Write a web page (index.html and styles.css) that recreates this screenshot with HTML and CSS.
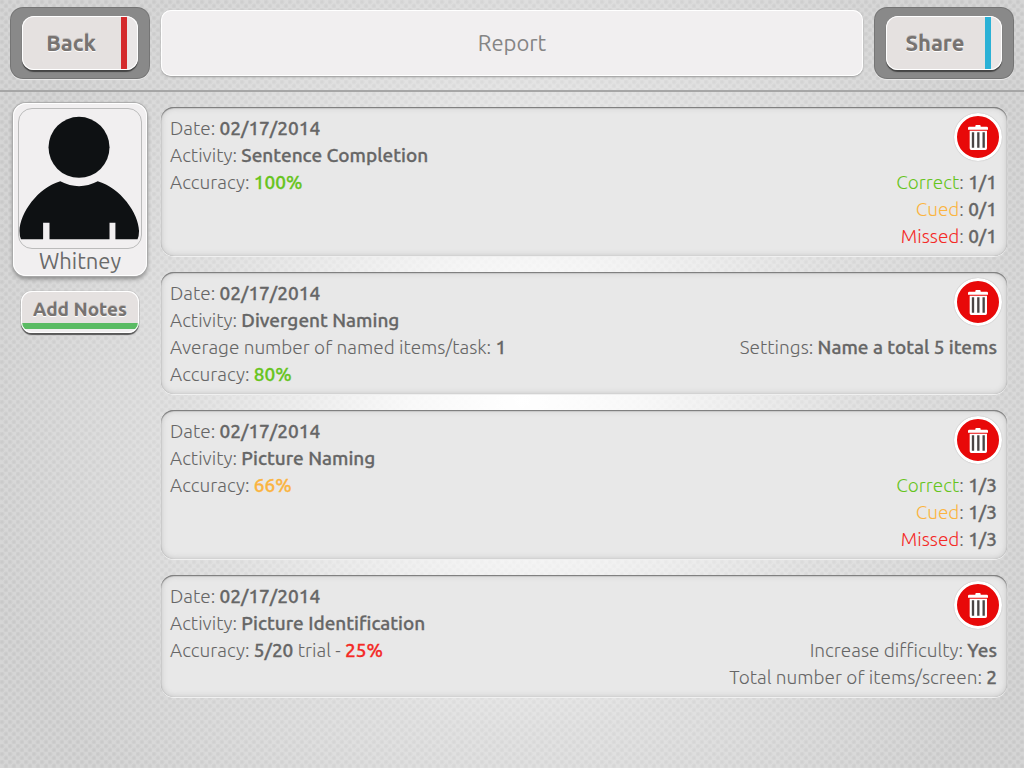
FILE: index.html
```html
<!DOCTYPE html>
<html lang="en">
<head>
<meta charset="utf-8">
<meta name="viewport" content="width=device-width, initial-scale=1">
<title>Report</title>
<link rel="stylesheet" href="styles.css">
</head>
<body>
<svg class="defs" aria-hidden="true">
  <symbol id="trash" viewBox="0 0 60 75">
    <path fill="#fff" d="M0 14V9Q0 5 4 5H22V3Q22 0 25 0H35Q38 0 38 3V5H56Q60 5 60 9V14ZM5 17H57V70Q57 75 52 75H10Q5 75 5 70Z"/>
    <path stroke="#4a4545" stroke-width="7" d="M15 22V68M31 22V68M47 22V68"/>
  </symbol>
</svg>
<header class="topbar">
  <div class="well"><button class="key key-back" type="button">Back</button></div>
  <h1 class="title">Report</h1>
  <div class="well"><button class="key key-share" type="button">Share</button></div>
</header>
<div class="layout">
  <aside class="sidebar">
    <figure class="profile">
      <svg class="avatar" viewBox="0 0 124 141" role="img" aria-label="Whitney">
        <g fill="#0e1113">
          <circle cx="61" cy="39" r="31"/>
          <path d="M42 73.500Q61 83.500 80 73.500C103 80 121.500 106 122 124Q122 129 120.500 132.500H98V115.500H92V132.500H31V115.500H24.500V132.500H2Q.5 129 .5 124C1 106 19 80 42 73.500Z"/>
        </g>
      </svg>
      <figcaption class="name">Whitney</figcaption>
    </figure>
    <button class="notes" type="button">Add Notes</button>
  </aside>
  <main class="reports">
    <article class="card">
      <div class="info">
        <p>Date: <b>02/17/2014</b></p>
        <p>Activity: <b>Sentence Completion</b></p>
        <p>Accuracy: <b class="good">100%</b></p>
      </div>
      <div class="stats">
        <button class="delete" type="button" aria-label="Delete report"><svg class="bin"><use href="#trash"/></svg></button>
        <p><span class="good">Correct</span>: <b>1/1</b></p>
        <p><span class="fair">Cued</span>: <b>0/1</b></p>
        <p><span class="poor">Missed</span>: <b>0/1</b></p>
      </div>
    </article>
    <article class="card">
      <div class="info">
        <p>Date: <b>02/17/2014</b></p>
        <p>Activity: <b>Divergent Naming</b></p>
        <p>Average number of named items/task: <b>1</b></p>
        <p>Accuracy: <b class="good">80%</b></p>
      </div>
      <div class="stats">
        <button class="delete" type="button" aria-label="Delete report"><svg class="bin"><use href="#trash"/></svg></button>
        <p>Settings: <b>Name a total 5 items</b></p>
      </div>
    </article>
    <article class="card">
      <div class="info">
        <p>Date: <b>02/17/2014</b></p>
        <p>Activity: <b>Picture Naming</b></p>
        <p>Accuracy: <b class="fair">66%</b></p>
      </div>
      <div class="stats">
        <button class="delete" type="button" aria-label="Delete report"><svg class="bin"><use href="#trash"/></svg></button>
        <p><span class="good">Correct</span>: <b>1/3</b></p>
        <p><span class="fair">Cued</span>: <b>1/3</b></p>
        <p><span class="poor">Missed</span>: <b>1/3</b></p>
      </div>
    </article>
    <article class="card">
      <div class="info">
        <p>Date: <b>02/17/2014</b></p>
        <p>Activity: <b>Picture Identification</b></p>
        <p>Accuracy: <b>5/20</b> trial - <b class="poor">25%</b></p>
      </div>
      <div class="stats">
        <button class="delete" type="button" aria-label="Delete report"><svg class="bin"><use href="#trash"/></svg></button>
        <p>Increase difficulty: <b>Yes</b></p>
        <p>Total number of items/screen: <b>2</b></p>
      </div>
    </article>
  </main>
</div>
</body>
</html>
```
FILE: styles.css
```css
* { box-sizing: border-box; }

body {
  margin: 0;
  min-height: 100vh;
  color: #666;
  font: 300 19px/27px Ubuntu, "Open Sans", "Noto Sans", sans-serif;
  background:
    radial-gradient(circle 560px at 51% 52%, #fff 0%, rgba(255, 255, 255, 0.86) 20%, rgba(255, 255, 255, 0.3) 60%, rgba(255, 255, 255, 0) 100%),
    radial-gradient(circle at 2px 2px, #c9c9c9 1px, transparent 3px) 0 0 / 8px 8px,
    radial-gradient(circle at 6px 6px, #c9c9c9 1px, transparent 3px) 0 0 / 8px 8px,
    #d5d5d5;
}

p, h1, figure { margin: 0; }
b { font-weight: 500; -webkit-text-stroke: 0.3px currentColor; }
button { font: inherit; border: 0; padding: 0; cursor: pointer; }
.defs { display: none; }

.topbar {
  display: flex;
  gap: 12px;
  padding: 8px 11px 12px;
  border-bottom: 2px solid #a6a6a6;
}

.well {
  width: 138px;
  height: 70px;
  padding: 8px 11px;
  border-radius: 12px;
  background: #898989;
  box-shadow: 0 0 0 1px #757575, 0 1px 0 1px #e8e8e8;
}

.key {
  width: 100%;
  height: 54px;
  padding: 0 18px 2px 0;
  border-radius: 12px;
  color: #777371;
  font-size: 22px;
  font-weight: 700;
  text-shadow: 0 -1px 0 #bdb9b8, 0 1px 0 #fff;
  box-shadow: inset 0 0 0 1px #fff, 0 2px 1px #444;
}

.key-back { background: linear-gradient(to left, #eae7e7 11px, #d42a2c 11px 17px, #e5e1e0 17px); }
.key-share { background: linear-gradient(to left, #eae7e7 11px, #2bb1d6 11px 17px, #e5e1e0 17px); }

.title {
  flex: 1;
  margin: 2px 0;
  border-radius: 10px;
  background: #f1eff0;
  box-shadow: inset 0 0 0 1px #fff, 0 1px 2px #999;
  color: #858585;
  font-size: 22px;
  font-weight: 400;
  line-height: 65px;
  text-align: center;
}

.layout {
  display: flex;
  gap: 12px;
  padding: 11px 17px 20px 11px;
}

.sidebar {
  display: flex;
  flex-direction: column;
  align-items: center;
  gap: 15px;
  width: 138px;
}

.profile {
  width: 134px;
  padding: 5px 5px 3px;
  border-radius: 13px;
  background: #f1eff0;
  box-shadow: inset 0 0 0 1px #fff, 0 0 1px 1px #aaa, 0 3px 4px #888;
  text-align: center;
}

.avatar {
  display: block;
  width: 100%;
  border: 1px solid #bbb;
  border-radius: 14px;
}

.name {
  color: #6a6a6a;
  font-size: 22px;
  font-weight: 400;
  line-height: 24px;
}

.notes {
  width: 118px;
  height: 42px;
  padding-bottom: 5px;
  border-radius: 11px;
  background: linear-gradient(to top, #f1eff0 4px, #5abb63 4px 10px, #e5e1e0 10px);
  box-shadow: inset 0 0 0 1px #fff, 0 0 1px #777, 0 2px 1px #555;
  color: #777371;
  font-weight: 700;
  text-shadow: 0 -1px 0 #bdb9b8, 0 1px 0 #fff;
}

.reports {
  flex: 1;
  display: flex;
  flex-direction: column;
  gap: 16px;
  padding-top: 4px;
}

.card {
  display: flex;
  justify-content: space-between;
  padding: 6px 5px 6px 9px;
  border-radius: 13px;
  background: #e8e8e8;
  box-shadow: inset 0 2px 1px -1px #808080, inset 0 1px 1px #808080, inset 0 0 1px #aaa, inset 0 0 6px #c0c0c0, 0 1px 0 #f0f0f0;
}

.info { padding-top: 2px; }

.stats {
  display: flex;
  flex-direction: column;
  align-items: flex-end;
}

.stats p { padding-right: 5px; }

.delete {
  display: grid;
  place-items: center;
  width: 48px;
  height: 48px;
  margin-bottom: 8px;
  border: 3px solid #fff;
  border-radius: 50%;
  background: #e80909;
  box-shadow: 0 0 1px #999;
}

.bin { width: 20px; height: 25px; }

.good { color: #66c41c; }
.fair { color: #fbb440; }
.poor { color: #f42a26; }
```
